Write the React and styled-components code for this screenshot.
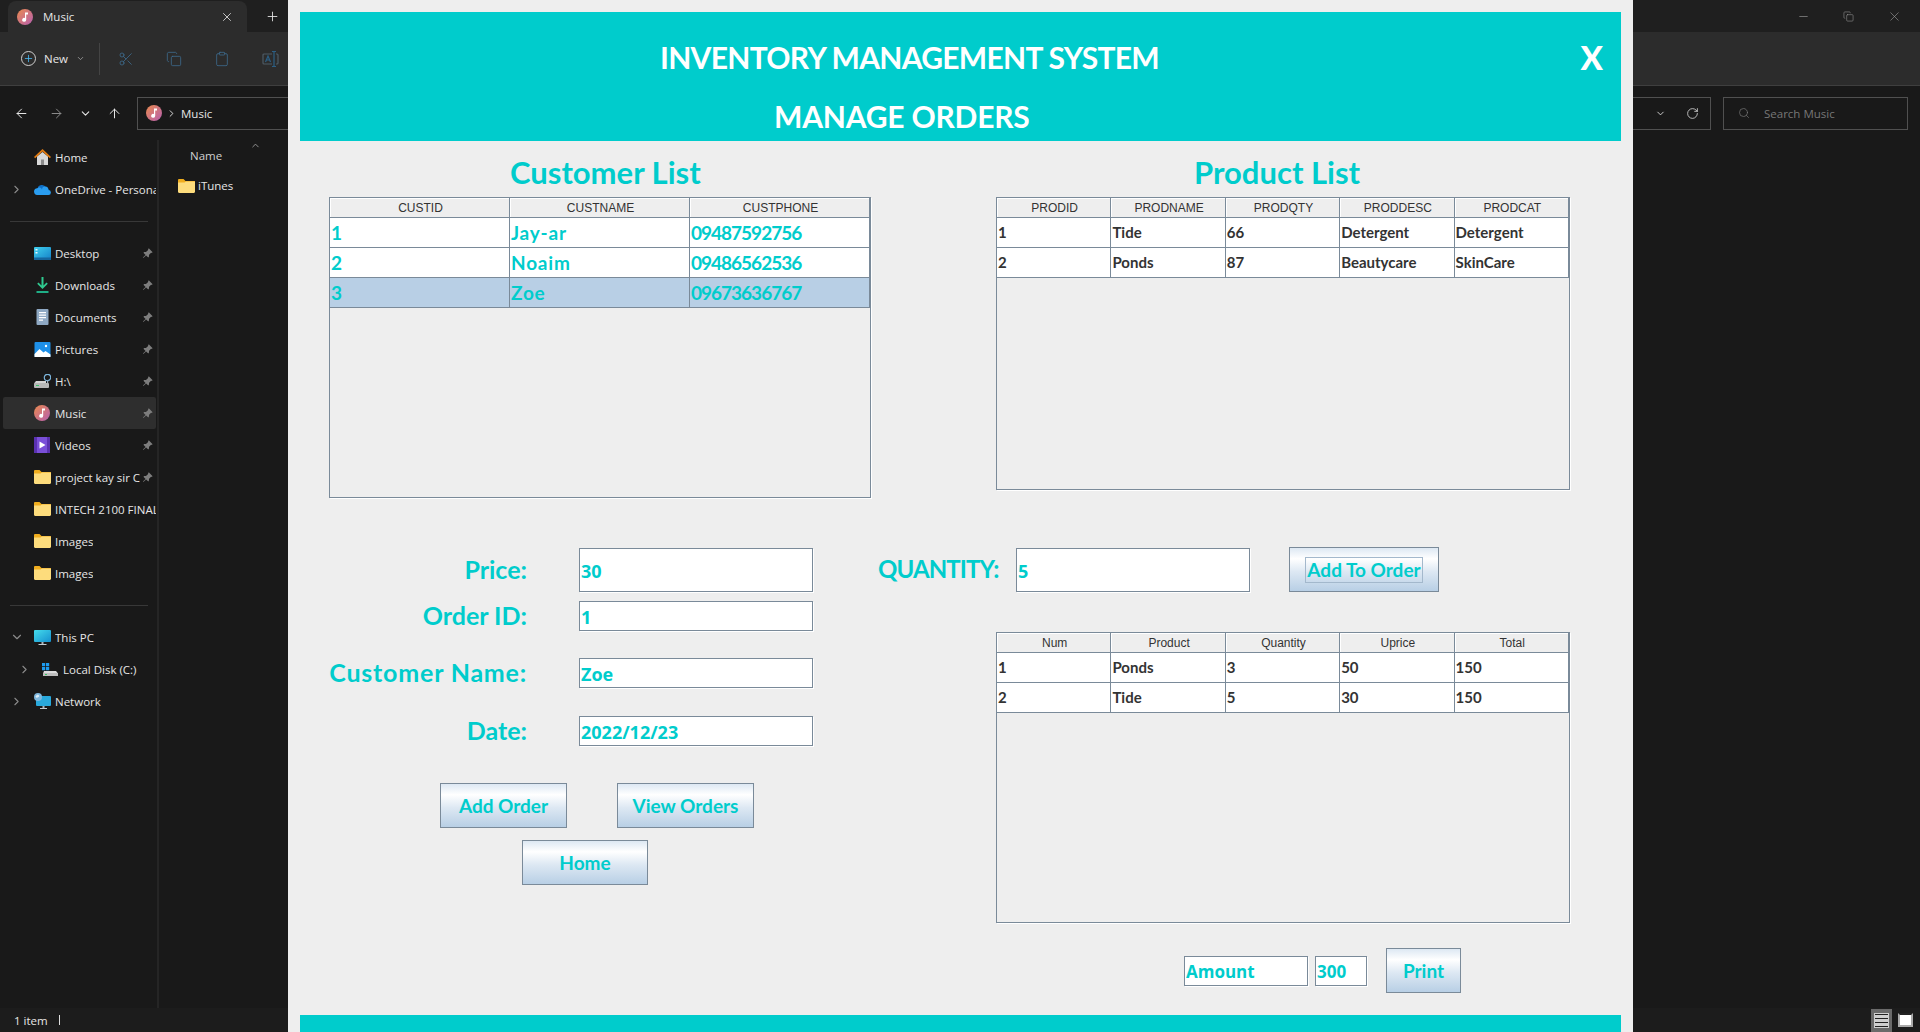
import styled, { createGlobalStyle } from "styled-components";
import {
  ArrowLeft,
  ArrowRight,
  ArrowUp,
  ChevronDown,
  ChevronRight,
  ChevronUp,
  Clipboard,
  Copy,
  Minus,
  Plus,
  RotateCw,
  Scissors,
  Search,
  X,
} from "lucide-react";
import { BsPinAngleFill } from "react-icons/bs";

const TEAL = "#00cccc";
const STEEL = "#7a8a99";
const GOTHIC = `"Lato", "Open Sans", sans-serif`;
const SEGOE = `"Open Sans", "Noto Sans", sans-serif`;

const customerCols = ["CUSTID", "CUSTNAME", "CUSTPHONE"];
const customerRows = [
  ["1", "Jay-ar", "09487592756"],
  ["2", "Noaim", "09486562536"],
  ["3", "Zoe", "09673636767"],
];
const productCols = ["PRODID", "PRODNAME", "PRODQTY", "PRODDESC", "PRODCAT"];
const productRows = [
  ["1", "Tide", "66", "Detergent", "Detergent"],
  ["2", "Ponds", "87", "Beautycare", "SkinCare"],
];
const orderCols = ["Num", "Product", "Quantity", "Uprice", "Total"];
const orderRows = [
  ["1", "Ponds", "3", "50", "150"],
  ["2", "Tide", "5", "30", "150"],
];

const GlobalStyle = createGlobalStyle`
  html, body {
    margin: 0;
    height: 100%;
    overflow: hidden;
    background: #191919;
  }
  #root {
    height: 100%;
  }
`;

/* ---- small drawn icons for the explorer ---- */

const MusicIcon = ({ size = 16 }) => (
  <svg width={size} height={size} viewBox="0 0 16 16">
    <defs>
      <linearGradient id="musicGrad" x1="0" y1="0" x2="1" y2="1">
        <stop offset="0" stopColor="#ea8a4e" />
        <stop offset="1" stopColor="#b65fb0" />
      </linearGradient>
    </defs>
    <circle cx="8" cy="8" r="8" fill="url(#musicGrad)" />
    <path d="M8 3.5h3v2H9.2v5.2a2 2 0 1 1-1.2-1.8z" fill="#fff" />
  </svg>
);

const FolderIcon = () => (
  <svg width="17" height="14" viewBox="0 0 17 14">
    <path d="M0 1.2C0 .5.5 0 1.2 0h4.3l2 2H17v3H0z" fill="#f0ad1e" />
    <path d="M0 3.4h6.5l1.4-1H16c.6 0 1 .4 1 1v9.4c0 .7-.5 1.2-1.2 1.2H1.2C.5 14 0 13.5 0 12.8z" fill="#fddc7c" />
  </svg>
);

const HomeIcon = () => (
  <svg width="17" height="16" viewBox="0 0 17 16">
    <path d="M3 7.5 8.5 3 14 7.5V16H3z" fill="#d8d8d8" />
    <rect x="7" y="10.5" width="3" height="5.5" fill="#8a8a8a" />
    <path d="M0 8 8.5 0 17 8l-1.2 1.2-7.3-6.8-7.3 6.8z" fill="#e07a12" />
  </svg>
);

const CloudIcon = () => (
  <svg width="17" height="11" viewBox="0 0 17 11">
    <path d="M3.5 5A4.5 4.5 0 0 1 12 3.4 3 3 0 0 1 15 6H6z" fill="#0f6fc6" />
    <path d="M3.6 11a3.4 3.4 0 0 1-.3-6.8A3 3 0 0 1 8 5.4 2.8 2.8 0 0 1 14.2 6 2.5 2.5 0 0 1 14.5 11z" fill="#2a9df0" />
  </svg>
);

const DesktopIcon = () => (
  <svg width="17" height="13" viewBox="0 0 17 13">
    <defs>
      <linearGradient id="deskGrad" x1="0" y1="0" x2="1" y2="1">
        <stop offset="0" stopColor="#3fd0ee" />
        <stop offset="1" stopColor="#1480c8" />
      </linearGradient>
    </defs>
    <rect width="17" height="13" rx="1" fill="url(#deskGrad)" />
    <rect y="10.5" width="17" height="2.5" fill="#15679f" />
    <rect x="1.5" y="2" width="2" height="1.5" fill="#e6f6fb" />
    <rect x="1.5" y="5" width="2" height="1.5" fill="#e6f6fb" />
  </svg>
);

const DownloadIcon = () => (
  <svg width="17" height="16" viewBox="0 0 17 16">
    <path d="M7.5 0h2v8.5l3-3 1.3 1.3L8.5 12 3.2 6.8 4.5 5.5l3 3z" fill="#2fc98f" />
    <rect x="2.5" y="14" width="12" height="2" fill="#1fae86" />
  </svg>
);

const DocIcon = () => (
  <svg width="17" height="16" viewBox="0 0 17 16">
    <rect x="2.5" width="12" height="16" rx="1" fill="#8fa9c4" />
    <path d="M5 3h7v1.2H5zM5 5.5h7v1.2H5zM5 8h7v1.2H5zM5 10.5h4v1.2H5z" fill="#fff" />
  </svg>
);

const PictureIcon = () => (
  <svg width="17" height="15" viewBox="0 0 17 15">
    <rect width="16" height="15" x=".5" rx="1" fill="#1e90e8" />
    <path d="M.5 15V12l5-5 4 3.5 2-1.5 5 3.5V15z" fill="#fff" />
    <circle cx="12" cy="4" r="1.2" fill="#fff" />
  </svg>
);

const DriveIcon = () => (
  <svg width="17" height="14" viewBox="0 0 17 14">
    <path d="M2 7h10v2.5H0z" fill="#d4d4d4" />
    <rect y="9" width="15" height="5" rx="1" fill="#b8b8b8" />
    <rect x="2" y="11" width="3" height="1" fill="#3bc16a" />
    <circle cx="13.5" cy="3.5" r="3.2" fill="none" stroke="#7cb5dc" strokeWidth="1.2" />
    <rect x="13" y="6" width="1.2" height="3" fill="#9ab" />
  </svg>
);

const VideoIcon = () => (
  <svg width="16" height="16" viewBox="0 0 16 16">
    <rect width="16" height="16" rx="1" fill="#7a4fd8" />
    <path d="M0 0h3v16H0zM13 0h3v16h-3z" fill="#5a31b0" />
    <path d="M5.5 4.5 11.5 8l-6 3.5z" fill="#fff" />
  </svg>
);

const PcIcon = () => (
  <svg width="17" height="15" viewBox="0 0 17 15">
    <defs>
      <linearGradient id="pcGrad" x1="0" y1="0" x2="1" y2="1">
        <stop offset="0" stopColor="#45dcec" />
        <stop offset="1" stopColor="#1590cf" />
      </linearGradient>
    </defs>
    <rect width="17" height="12" rx="1" fill="url(#pcGrad)" />
    <rect x="7.5" y="12" width="2" height="2" fill="#a9b4bc" />
    <rect x="4.5" y="14" width="8" height="1" fill="#c3ccd2" />
  </svg>
);

const DiskIcon = () => (
  <svg width="16" height="13" viewBox="0 0 16 13">
    <path d="M0 0h3.2v3.2H0zM4 0h3.2v3.2H4zM0 4h3.2v3.2H0zM4 4h3.2v3.2H4z" fill="#1d9bf0" />
    <path d="M2 8h12l2 2.5H1z" fill="#dcdcdc" />
    <rect x="1" y="10" width="15" height="3" fill="#bdbdbd" />
    <rect x="3" y="11" width="2" height="1" fill="#3bc16a" />
  </svg>
);

const NetworkIcon = () => (
  <svg width="17" height="17" viewBox="0 0 17 17">
    <rect x="2" y="3" width="15" height="10" rx="1" fill="#29a9dc" />
    <rect x="8.5" y="13" width="2" height="2" fill="#a9b4bc" />
    <rect x="6" y="15" width="7" height="1" fill="#c3ccd2" />
    <circle cx="4" cy="4" r="4" fill="#7fb8de" />
    <path d="M1.5 3.5c1-1.5 2-2 3-1.5s1 1.5 0 2-2 1.500-3-.5z" fill="#dcecf6" />
  </svg>
);

const RenameIcon = () => (
  <svg width="17" height="16" viewBox="0 0 17 16" fill="none" stroke="#2c5f84" strokeWidth="1.2">
    <path d="M10 3H2a1 1 0 0 0-1 1v8a1 1 0 0 0 1 1h8M14 3h1a1 1 0 0 1 1 1v8a1 1 0 0 1-1 1h-1" stroke="#4d5a64" />
    <path d="M12 .5v15M10 .5h4M10 15.500h4" />
    <path d="M3.500 11 6 5l2.500 6M4.500 9h3" />
  </svg>
);

/* ---- explorer behind the java window ---- */

const Explorer = styled.div`
  height: 100vh;
  display: flex;
  flex-direction: column;
  background: #191919;
  color: #e6e6e6;
  font-family: ${SEGOE};
  font-size: 11.5px;
`;

const TabStrip = styled.div`
  height: 32px;
  flex: none;
  background: #1f1f1f;
  display: flex;
  align-items: flex-end;
  padding: 0 6px 0 8px;
`;

const Tab = styled.div`
  width: 239px;
  height: 31px;
  box-sizing: border-box;
  padding: 0 13px 0 9px;
  background: #2c2c2c;
  border-radius: 8px 8px 0 0;
  display: flex;
  align-items: center;
  gap: 10px;
`;

const TabName = styled.span`
  flex: 1;
`;

const NewTab = styled.div`
  margin-left: 18px;
  height: 32px;
  display: flex;
  align-items: center;
`;

const WindowControls = styled.div`
  margin-left: auto;
  height: 32px;
  display: flex;
  align-items: center;
  gap: 33px;
  padding-right: 12px;
  color: #9a9a9a;
`;

const Toolbar = styled.div`
  height: 54px;
  flex: none;
  box-sizing: border-box;
  background: #2c2c2c;
  border-bottom: 1px solid #3f3f3f;
  display: flex;
  align-items: center;
  padding-left: 21px;
`;

const NewButton = styled.div`
  display: flex;
  align-items: center;
  gap: 8px;
`;

const CirclePlus = styled.div`
  width: 15px;
  height: 15px;
  box-sizing: border-box;
  border: 1px solid #cfcfcf;
  border-radius: 50%;
  display: flex;
  align-items: center;
  justify-content: center;
  color: #4cc2ff;
`;

const ToolDivider = styled.div`
  width: 1px;
  height: 32px;
  background: #444;
  margin: 0 18px 0 14px;
`;

const ToolIcons = styled.div`
  display: flex;
  align-items: center;
  gap: 32px;
  color: #3d6c8f;
`;

const AddressBar = styled.div`
  height: 54px;
  flex: none;
  box-sizing: border-box;
  display: flex;
  align-items: center;
  padding: 0 12px 0 14px;
`;

const NavButtons = styled.div`
  width: 123px;
  display: flex;
  align-items: center;
  gap: 15px;
`;

const NavForward = styled(ArrowRight)`
  margin-left: 5px;
`;

const AddressBox = styled.div`
  flex: 1;
  height: 33px;
  box-sizing: border-box;
  border: 1px solid #505050;
  display: flex;
  align-items: center;
  padding: 0 11px 0 8px;
  gap: 4px;
`;

const AddressEnd = styled.div`
  margin-left: auto;
  display: flex;
  align-items: center;
  gap: 20px;
  color: #d8d8d8;
`;

const SearchBox = styled.div`
  width: 185px;
  height: 33px;
  box-sizing: border-box;
  margin-left: 12px;
  border: 1px solid #505050;
  display: flex;
  align-items: center;
  gap: 14px;
  padding-left: 14px;
  color: #777;
`;

const ExplorerBody = styled.div`
  flex: 1;
  min-height: 0;
  display: flex;
`;

const Sidebar = styled.div`
  width: 157px;
  flex: none;
  box-sizing: border-box;
  padding-top: 1px;
  overflow: hidden;
`;

const SideRow = styled.div`
  height: 32px;
  margin: 0 1px 0 3px;
  box-sizing: border-box;
  padding: 0 3px 0 ${(p) => 7 + p.$depth * 8}px;
  display: flex;
  align-items: center;
  overflow: hidden;
  border-radius: 2px;
  background: ${(p) => (p.$active ? "#2e2e2e" : "transparent")};
`;

const ChevronSlot = styled.span`
  width: 24px;
  flex: none;
  display: flex;
  color: #8a8a8a;
`;

const IconSlot = styled.span`
  width: 21px;
  flex: none;
  display: flex;
  align-items: center;
`;

const SideLabel = styled.span`
  white-space: nowrap;
  flex: ${(p) => (p.$pinned ? "0 1 85px" : "none")};
  overflow: hidden;
`;

const PinSlot = styled.span`
  margin-left: auto;
  display: flex;
  color: #7d7d7d;
`;

const SideDivider = styled.div`
  height: 1px;
  background: #383838;
  margin: 16px 9px 15px 10px;
`;

const SideSplit = styled.div`
  width: 2px;
  flex: none;
  background: #252525;
`;

const FileArea = styled.div`
  flex: 1;
  padding-left: 31px;
`;

const NameHeader = styled.div`
  height: 30px;
  display: flex;
  align-items: center;
  color: #d0d0d0;
  position: relative;
`;

const SortCaret = styled.span`
  position: absolute;
  left: 60px;
  top: -1px;
  color: #999;
`;

const FileRow = styled.div`
  display: flex;
  align-items: center;
  gap: 3px;
  margin: 8px 0 0 -12px;
`;

const StatusBar = styled.div`
  height: 24px;
  flex: none;
  background: #1c1c1c;
  display: flex;
  align-items: center;
  padding-left: 14px;
`;

const StatusDivider = styled.span`
  width: 1px;
  height: 10px;
  background: #ddd;
  margin-left: 11px;
`;

const ViewToggles = styled.div`
  margin-left: auto;
  display: flex;
  align-items: center;
  gap: 3px;
  padding-right: 4px;
`;

const ViewButton = styled.div`
  width: 21px;
  height: 23px;
  display: flex;
  align-items: center;
  justify-content: center;
  background: ${(p) => (p.$on ? "#6a6a6a" : "transparent")};
`;

const ListGlyph = styled.div`
  width: 15px;
  height: 15px;
  background: repeating-linear-gradient(#222 0 1.5px, #cfcfcf 1.5px 4px);
  border: 1px solid #cfcfcf;
  box-sizing: border-box;
`;

const PreviewGlyph = styled.div`
  width: 15px;
  height: 14px;
  box-sizing: border-box;
  background: #fff;
  border: 2px solid #aaa;
  border-top-color: #222;
`;

/* ---- java swing window ---- */

const JavaWindow = styled.div`
  position: absolute;
  left: 288px;
  top: 0;
  width: 1345px;
  height: 1032px;
  box-sizing: border-box;
  padding: 12px 12px 0 12px;
  background: #eeeeee;
  display: flex;
  flex-direction: column;
  font-family: ${GOTHIC};
  color: ${TEAL};
`;

const Banner = styled.div`
  height: 129px;
  flex: none;
  box-sizing: border-box;
  background: ${TEAL};
  color: #fff;
  padding: 25px 18px 0 0;
  display: flex;
  justify-content: space-between;
  align-items: flex-start;
`;

const BannerTitles = styled.div`
  display: flex;
  flex-direction: column;
  gap: 19px;
`;

const BannerLine = styled.div`
  height: 40px;
  line-height: 40px;
  margin-left: ${(p) => p.$indent}px;
  font-size: 30px;
  font-weight: 700;
  letter-spacing: ${(p) => p.$tracking}px;
  white-space: nowrap;
`;

const CloseMark = styled.div`
  height: 40px;
  line-height: 40px;
  font-size: 33px;
  font-weight: 900;
`;

const ListsRow = styled.div`
  height: 406px;
  flex: none;
  display: flex;
  padding-left: 29px;
  gap: 125px;
`;

const ListSection = styled.section`
  width: ${(p) => p.$width}px;
`;

const ListTitle = styled.h2`
  margin: 0;
  height: 56px;
  line-height: 62px;
  padding-left: ${(p) => p.$indent}px;
  font-size: 31px;
  font-weight: 700;
  white-space: nowrap;
`;

const TableFrame = styled.div`
  height: ${(p) => p.$height}px;
  width: ${(p) => p.$width}px;
  box-sizing: border-box;
  border: 1px solid ${STEEL};
  box-shadow: 1px 1px 0 #fff;
`;

const Grid = styled.table`
  width: 100%;
  table-layout: fixed;
  border-collapse: separate;
  border-spacing: 0;
`;

const HeadCell = styled.th`
  height: 20px;
  padding: 1px 0 0 2px;
  box-sizing: border-box;
  font-family: "Liberation Sans", Arial, sans-serif;
  font-size: 12px;
  font-weight: 400;
  color: #333;
  background: #eee;
  border-right: 1px solid ${STEEL};
  border-bottom: 1px solid ${STEEL};
  box-shadow: inset 1px 1px 0 #fff;
`;

const BodyCell = styled.td`
  height: 30px;
  padding: 0 0 ${(p) => (p.$tone === "teal" ? 0 : 2)}px 1px;
  box-sizing: border-box;
  background: ${(p) => (p.$selected ? "#b8cfe5" : "#fff")};
  color: ${(p) => (p.$tone === "teal" ? TEAL : "#333")};
  font-size: ${(p) => (p.$tone === "teal" ? "19px" : "15px")};
  font-weight: 700;
  letter-spacing: ${(p) => {
    if (p.$tone !== "teal") return "0";
    return p.$digits ? "-1px" : "0.8px";
  }};
  border-right: 1px solid ${STEEL};
  border-bottom: 1px solid ${STEEL};
  white-space: nowrap;
  overflow: hidden;
`;

const LowerRow = styled.div`
  flex: 1;
  min-height: 0;
  display: flex;
`;

const FormPanel = styled.div`
  width: 560px;
  flex: none;
  padding-top: 1px;
`;

const FieldRow = styled.div`
  display: grid;
  grid-template-columns: 227px 234px;
  grid-template-rows: ${(p) => p.$height}px;
  column-gap: 52px;
  align-items: center;
  height: ${(p) => p.$height}px;
  margin-top: ${(p) => p.$gap}px;
`;

const FieldLabel = styled.label`
  text-align: right;
  font-size: 25px;
  line-height: 26px;
  font-weight: 700;
  letter-spacing: ${(p) => p.$tracking || 0}px;
  padding-bottom: 2px;
  white-space: nowrap;
`;

const TextBox = styled.input`
  width: ${(p) => p.$width || 234}px;
  height: ${(p) => p.$height}px;
  box-sizing: border-box;
  margin: 0;
  padding: 2px 1px 0;
  border: 1px solid ${STEEL};
  border-radius: 0;
  outline: none;
  background: #fff;
  box-shadow: 1px 1px 0 #fff;
  color: ${TEAL};
  font-family: ${SEGOE};
  font-size: ${(p) => p.$size || 18}px;
  font-weight: 700;
`;

const ActionRow = styled.div`
  display: flex;
  gap: 50px;
  margin-top: ${(p) => p.$gap}px;
  padding-left: ${(p) => p.$indent}px;
`;

const OceanButton = styled.button`
  width: ${(p) => p.$width}px;
  height: 45px;
  flex: none;
  box-sizing: border-box;
  margin: 0;
  padding: 0;
  border: 1px solid ${STEEL};
  background: linear-gradient(#dde8f3 0, #fff 25%, #dde8f3 55%, #b8cfe5 100%);
  color: ${TEAL};
  font-family: ${GOTHIC};
  font-size: 19px;
  font-weight: 700;
  display: flex;
  align-items: center;
  justify-content: center;
`;

const FocusRing = styled.span`
  width: 118px;
  height: 26px;
  box-sizing: border-box;
  border: 1px solid #a3b8cc;
  display: flex;
  align-items: center;
  justify-content: center;
  white-space: nowrap;
`;

const OrderPanel = styled.div`
  flex: 1;
`;

const QuantityRow = styled.div`
  display: flex;
  align-items: center;
  height: 45px;
  padding-left: 18px;
`;

const QuantityLabel = styled.label`
  width: 138px;
  flex: none;
  font-size: 24px;
  font-weight: 700;
  letter-spacing: -0.9px;
  padding-bottom: 3px;
`;

const QuantitySpacer = styled.span`
  width: 39px;
  flex: none;
`;

const OrdersWrap = styled.div`
  margin: 40px 0 0 136px;
`;

const AmountRow = styled.div`
  display: flex;
  align-items: center;
  margin-top: 25px;
  padding-left: 324px;
  gap: 7px;
`;

const PrintGap = styled.span`
  width: 5px;
  flex: none;
`;

const FooterBand = styled.div`
  height: 17px;
  flex: none;
  background: ${TEAL};
`;

const DataTable = ({ cols, rows, tone, selected, width, height }) => (
  <TableFrame $width={width} $height={height}>
    <Grid>
      <thead>
        <tr>
          {cols.map((c) => (
            <HeadCell key={c}>{c}</HeadCell>
          ))}
        </tr>
      </thead>
      <tbody>
        {rows.map((row, i) => (
          <tr key={row[0]}>
            {row.map((v, j) => (
              <BodyCell
                key={j}
                $tone={tone}
                $selected={i === selected}
                $digits={v.length > 1 && /^\d+$/.test(v)}
              >
                {v}
              </BodyCell>
            ))}
          </tr>
        ))}
      </tbody>
    </Grid>
  </TableFrame>
);

const SideItem = ({ icon, label, depth = 0, chevron, pinned, active }) => (
  <SideRow $depth={depth} $active={active}>
    <ChevronSlot>
      {chevron === "right" && <ChevronRight size={13} strokeWidth={2} />}
      {chevron === "down" && <ChevronDown size={14} strokeWidth={2} />}
    </ChevronSlot>
    <IconSlot>{icon}</IconSlot>
    <SideLabel $pinned={pinned}>{label}</SideLabel>
    {pinned && (
      <PinSlot>
        <BsPinAngleFill size={11} />
      </PinSlot>
    )}
  </SideRow>
);

const Field = ({ label, value, height, gap, tracking }) => (
  <FieldRow $height={height} $gap={gap}>
    <FieldLabel $tracking={tracking}>{label}</FieldLabel>
    <TextBox $height={height} value={value} readOnly />
  </FieldRow>
);

export default function App() {
  return (
    <>
      <GlobalStyle />
      <Explorer>
        <TabStrip>
          <Tab>
            <MusicIcon />
            <TabName>Music</TabName>
            <X size={14} strokeWidth={1.4} />
          </Tab>
          <NewTab>
            <Plus size={15} strokeWidth={1.4} />
          </NewTab>
          <WindowControls>
            <Minus size={13} strokeWidth={1.2} />
            <Copy size={11} strokeWidth={1.2} />
            <X size={15} strokeWidth={1} />
          </WindowControls>
        </TabStrip>
        <Toolbar>
          <NewButton>
            <CirclePlus>
              <Plus size={11} strokeWidth={1.6} />
            </CirclePlus>
            New
            <ChevronDown size={9} color="#aaa" />
          </NewButton>
          <ToolDivider />
          <ToolIcons>
            <Scissors size={16} strokeWidth={1.2} />
            <Copy size={16} strokeWidth={1.2} />
            <Clipboard size={16} strokeWidth={1.2} />
            <RenameIcon />
          </ToolIcons>
        </Toolbar>
        <AddressBar>
          <NavButtons>
            <ArrowLeft size={15} strokeWidth={1.6} />
            <NavForward size={15} strokeWidth={1.6} color="#8a8a8a" />
            <ChevronDown size={13} strokeWidth={2} />
            <ArrowUp size={15} strokeWidth={1.6} />
          </NavButtons>
          <AddressBox>
            <MusicIcon />
            <ChevronRight size={11} strokeWidth={2} />
            <span>Music</span>
            <AddressEnd>
              <ChevronDown size={11} />
              <RotateCw size={13} strokeWidth={1.5} />
            </AddressEnd>
          </AddressBox>
          <SearchBox>
            <Search size={12} strokeWidth={1.4} />
            Search Music
          </SearchBox>
        </AddressBar>
        <ExplorerBody>
          <Sidebar>
            <SideItem icon={<HomeIcon />} label="Home" />
            <SideItem icon={<CloudIcon />} label="OneDrive - Personal" chevron="right" />
            <SideDivider />
            <SideItem icon={<DesktopIcon />} label="Desktop" pinned />
            <SideItem icon={<DownloadIcon />} label="Downloads" pinned />
            <SideItem icon={<DocIcon />} label="Documents" pinned />
            <SideItem icon={<PictureIcon />} label="Pictures" pinned />
            <SideItem icon={<DriveIcon />} label="H:\" pinned />
            <SideItem icon={<MusicIcon />} label="Music" pinned active />
            <SideItem icon={<VideoIcon />} label="Videos" pinned />
            <SideItem icon={<FolderIcon />} label="project kay sir C" pinned />
            <SideItem icon={<FolderIcon />} label="INTECH 2100 FINAL" />
            <SideItem icon={<FolderIcon />} label="Images" />
            <SideItem icon={<FolderIcon />} label="Images" />
            <SideDivider />
            <SideItem icon={<PcIcon />} label="This PC" chevron="down" />
            <SideItem icon={<DiskIcon />} label="Local Disk (C:)" depth={1} chevron="right" />
            <SideItem icon={<NetworkIcon />} label="Network" chevron="right" />
          </Sidebar>
          <SideSplit />
          <FileArea>
            <NameHeader>
              Name
              <SortCaret>
                <ChevronUp size={11} />
              </SortCaret>
            </NameHeader>
            <FileRow>
              <FolderIcon />
              iTunes
            </FileRow>
          </FileArea>
        </ExplorerBody>
        <StatusBar>
          1 item
          <StatusDivider />
          <ViewToggles>
            <ViewButton $on>
              <ListGlyph />
            </ViewButton>
            <ViewButton>
              <PreviewGlyph />
            </ViewButton>
          </ViewToggles>
        </StatusBar>
      </Explorer>

      <JavaWindow>
        <Banner>
          <BannerTitles>
            <BannerLine $indent={360} $tracking={-0.7}>
              INVENTORY MANAGEMENT SYSTEM
            </BannerLine>
            <BannerLine $indent={474} $tracking={-0.2}>
              MANAGE ORDERS
            </BannerLine>
          </BannerTitles>
          <CloseMark>X</CloseMark>
        </Banner>

        <ListsRow>
          <ListSection $width={542}>
            <ListTitle $indent={181}>Customer List</ListTitle>
            <DataTable
              cols={customerCols}
              rows={customerRows}
              tone="teal"
              selected={2}
              width={542}
              height={301}
            />
          </ListSection>
          <ListSection $width={574}>
            <ListTitle $indent={198}>Product List</ListTitle>
            <DataTable cols={productCols} rows={productRows} tone="dark" width={574} height={293} />
          </ListSection>
        </ListsRow>

        <LowerRow>
          <FormPanel>
            <Field label="Price:" value="30" height={44} gap={0} />
            <Field label="Order ID:" value="1" height={30} gap={9} />
            <Field label="Customer Name:" value="Zoe" height={30} gap={27} tracking={0.8} />
            <Field label="Date:" value="2022/12/23" height={30} gap={28} />
            <ActionRow $gap={37} $indent={140}>
              <OceanButton $width={127}>Add Order</OceanButton>
              <OceanButton $width={137}>View Orders</OceanButton>
            </ActionRow>
            <ActionRow $gap={12} $indent={222}>
              <OceanButton $width={126}>Home</OceanButton>
            </ActionRow>
          </FormPanel>

          <OrderPanel>
            <QuantityRow>
              <QuantityLabel>QUANTITY:</QuantityLabel>
              <TextBox $height={44} value="5" readOnly />
              <QuantitySpacer />
              <OceanButton $width={150}>
                <FocusRing>Add To Order</FocusRing>
              </OceanButton>
            </QuantityRow>
            <OrdersWrap>
              <DataTable cols={orderCols} rows={orderRows} tone="dark" width={574} height={291} />
            </OrdersWrap>
            <AmountRow>
              <TextBox $width={124} $height={30} $size={17} value="Amount" readOnly />
              <TextBox $width={52} $height={30} $size={17} value="300" readOnly />
              <PrintGap />
              <OceanButton $width={75}>Print</OceanButton>
            </AmountRow>
          </OrderPanel>
        </LowerRow>

        <FooterBand />
      </JavaWindow>
    </>
  );
}
